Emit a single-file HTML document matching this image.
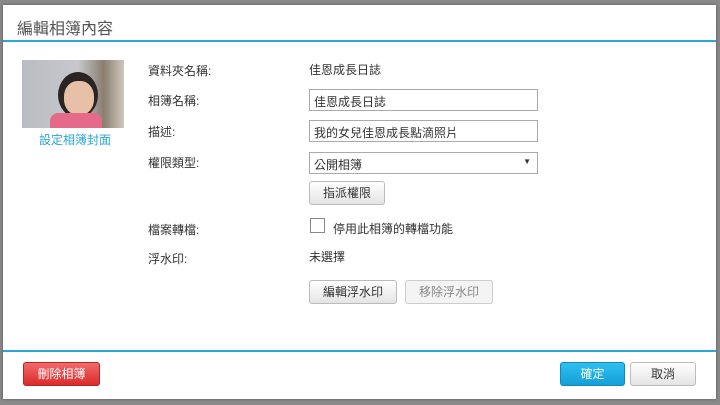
<html><head><style>
body{margin:0;width:720px;height:405px;background:#8a8a8a;position:relative;overflow:hidden;font-family:"Liberation Sans","Noto Sans CJK TC",sans-serif;font-size:12px;color:#333}
.dlg{position:absolute;left:3px;top:5px;width:713px;height:394px;background:#fff;box-shadow:0 0 3px #555}
.a{position:absolute}
.hdr{left:14px;top:10px;font-size:16px;color:#555}
.ln{left:0;width:713px;height:2px;background:#2aa7d6}
.inp{position:absolute;left:306px;width:229px;height:22px;border:1px solid #aaa;box-sizing:border-box;padding:3px 4px;font-size:12px}
.btn{position:absolute;height:24px;border:1px solid #bbb;border-radius:3px;box-sizing:border-box;background:linear-gradient(#fff,#e4e4e4);text-align:center;line-height:22px;font-size:12px}
</style></head><body>
<div class="dlg">
<div class="a hdr">編輯相簿內容</div>
<div class="a ln" style="top:35px"></div>
<div class="a" style="left:19px;top:55px;width:102px;height:68px;background:linear-gradient(90deg,#b9bcc2 0,#c7c8cc 55%,#8a7e70 80%,#cfc8bd);"></div>
<div class="a" style="left:55px;top:67px;width:40px;height:46px;border-radius:50%;background:#2a2522"></div>
<div class="a" style="left:61px;top:76px;width:30px;height:34px;border-radius:45%;background:#e8c0a8"></div>
<div class="a" style="left:47px;top:108px;width:52px;height:15px;background:#e56a8a;border-radius:8px 8px 0 0"></div>
<div class="a" style="left:36px;top:126px;color:#2aa7d6;font-size:12px">設定相簿封面</div>
<div class="a" style="left:145px;top:57px">資料夾名稱:</div>
<div class="a" style="left:306px;top:56px">佳恩成長日誌</div>
<div class="a" style="left:145px;top:87px">相簿名稱:</div>
<div class="inp" style="top:84px">佳恩成長日誌</div>
<div class="a" style="left:145px;top:118px">描述:</div>
<div class="inp" style="top:115px">我的女兒佳恩成長點滴照片</div>
<div class="a" style="left:145px;top:149px">權限類型:</div>
<div class="inp" style="top:147px">公開相簿<span style="position:absolute;right:6px;top:4px;font-size:8px">▼</span></div>
<div class="btn" style="left:306px;top:176px;width:76px">指派權限</div>
<div class="a" style="left:145px;top:216px">檔案轉檔:</div>
<div class="a" style="left:307px;top:213px;width:15px;height:15px;border:1px solid #888;box-sizing:border-box"></div>
<div class="a" style="left:330px;top:215px">停用此相簿的轉檔功能</div>
<div class="a" style="left:145px;top:245px">浮水印:</div>
<div class="a" style="left:306px;top:243px">未選擇</div>
<div class="btn" style="left:306px;top:275px;width:88px">編輯浮水印</div>
<div class="btn" style="left:402px;top:275px;width:88px;color:#888;background:#f4f4f4;border-color:#ccc">移除浮水印</div>
<div class="a ln" style="top:345px"></div>
<div class="btn" style="left:20px;top:357px;width:77px;background:linear-gradient(#f26a6a,#d92b2b);border-color:#b22;color:#fff">刪除相簿</div>
<div class="btn" style="left:557px;top:357px;width:65px;background:linear-gradient(#2ec0f0,#159fd8);border-color:#1188bb;color:#fff">確定</div>
<div class="btn" style="left:627px;top:357px;width:66px">取消</div>
</div>
</body></html>
